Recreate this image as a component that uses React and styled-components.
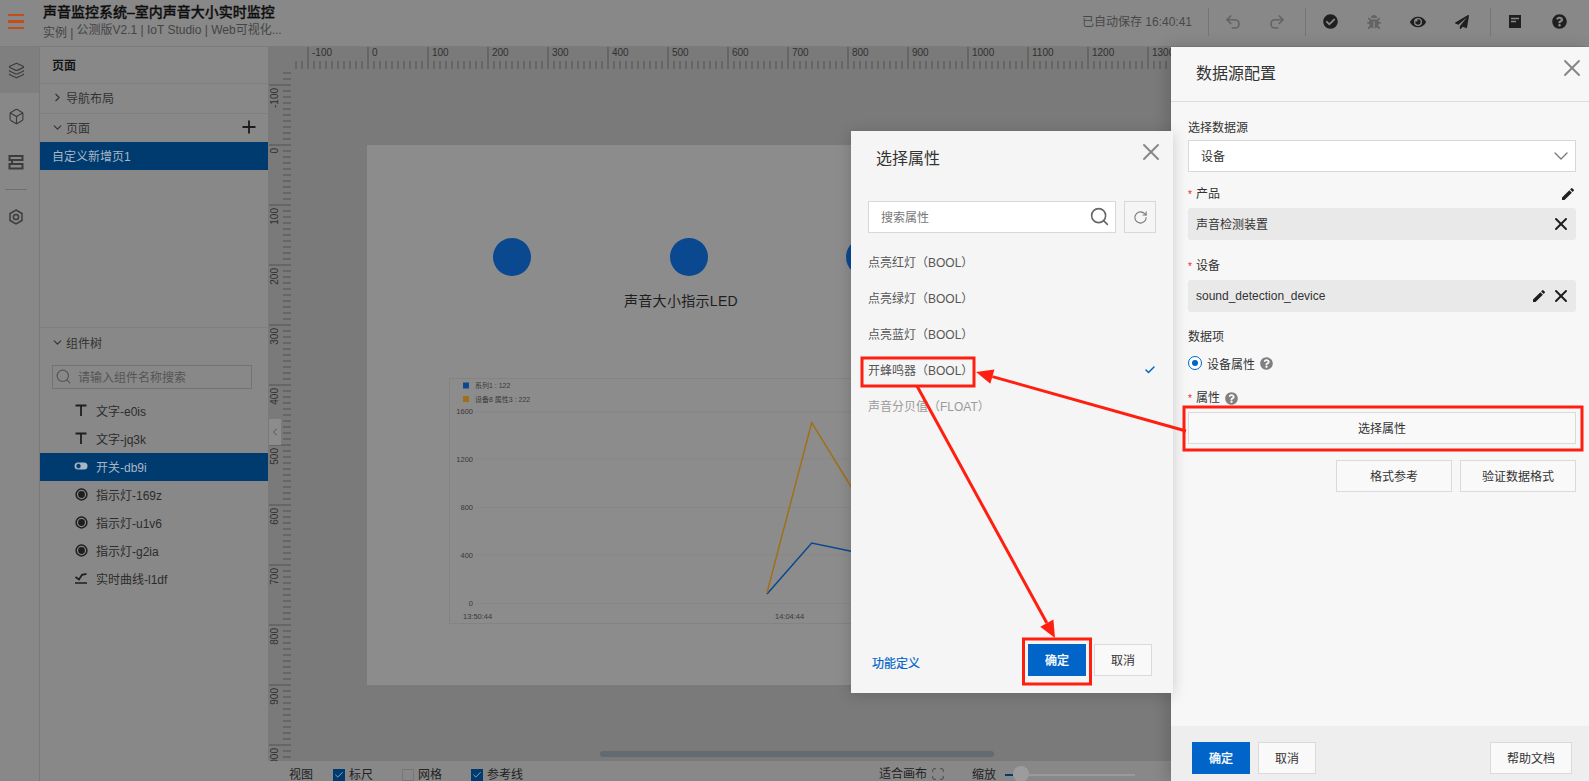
import React from "react";
import styled, { createGlobalStyle } from "styled-components";
import { Layers, Box, ChevronRight, ChevronDown, ChevronLeft, Plus, Search, X, RotateCw, Check, Undo2, Redo2, Maximize } from "lucide-react";
import { FaCheckCircle, FaBug, FaEye, FaPaperPlane, FaQuestionCircle } from "react-icons/fa";
import { MdEdit } from "react-icons/md";

const GlobalStyle = createGlobalStyle`
  html, body {
    margin: 0;
    padding: 0;
    overflow: hidden;
    background: #888;
    font-family: "Liberation Sans", "Noto Sans CJK SC", sans-serif;
    font-size: 12px;
  }
  * { box-sizing: border-box; }
`;

const Page = styled.div`
  position: relative;
  width: 1589px;
  height: 781px;
  overflow: hidden;
  display: flex;
  flex-direction: column;
  background: #888;
`;

/* top bar */
const Header = styled.header`
  height: 47px;
  flex: none;
  padding-bottom: 3px;
  display: flex;
  align-items: center;
  border-bottom: 1px solid #7c7c7c;
`;
const Burger = styled.div`
  width: 16px;
  margin: 0 19px 0 8px;
  display: flex;
  flex-direction: column;
  gap: 4px;
  span {
    height: 2.5px;
    background: #c04f1c;
  }
`;
const TitleBlock = styled.div`
  display: flex;
  flex-direction: column;
  gap: 1px;
  margin-top: -3px;
`;
const AppTitle = styled.div`
  font-size: 14px;
  line-height: 18px;
  font-weight: 500;
  color: #0e0e0e;
  -webkit-text-stroke: 0.3px #0e0e0e;
`;
const SubTitle = styled.div`
  font-size: 12px;
  line-height: 16px;
  color: #444;
  display: flex;
  gap: 3px;
  span:first-child {
    position: relative;
    top: 3px;
  }
`;
const SaveState = styled.div`
  margin: -3px 16px 0 auto;
  color: #484848;
  font-size: 12px;
`;
const Sep = styled.div`
  width: 1px;
  height: 28px;
  background: #757575;
`;
const ToolGroup = styled.div`
  display: flex;
  padding: ${(p) => p.$pad};
`;
const ToolBtn = styled.div`
  width: 44px;
  height: 36px;
  display: flex;
  align-items: center;
  justify-content: center;
  color: ${(p) => (p.$muted ? "#636363" : "#1f1f1f")};
`;

const Body = styled.div`
  flex: 1;
  display: flex;
  min-height: 0;
`;

/* icon rail */
const Rail = styled.nav`
  width: 40px;
  flex: none;
  border-right: 1px solid #7a7a7a;
  display: flex;
  flex-direction: column;
`;
const RailItem = styled.div`
  height: 46px;
  padding-right: 7px;
  display: flex;
  align-items: center;
  justify-content: center;
  color: #3c3c3c;
  background: ${(p) => (p.$active ? "#7f7f7f" : "transparent")};
`;
const RailLine = styled.div`
  height: 1px;
  width: 22px;
  margin: 4px 0 4px 5px;
  background: #6f6f6f;
`;

/* side panel */
const Side = styled.aside`
  width: 228px;
  flex: none;
  display: flex;
  flex-direction: column;
`;
const SideTitle = styled.div`
  height: 37px;
  padding: 0 0 2px 12px;
  display: flex;
  align-items: center;
  font-weight: bold;
  color: #161616;
  border-bottom: 1px solid #7e7e7e;
`;
const Section = styled.div`
  height: ${(p) => p.$h}px;
  display: flex;
  align-items: center;
  gap: 2px;
  padding: 0 9px 2px 11px;
  color: #333;
  border-bottom: ${(p) => (p.$line ? "1px solid #7e7e7e" : "none")};
  svg:last-child:not(:first-child) {
    margin-left: auto;
    color: #1c1c1c;
  }
`;
const SelectedRow = styled.div`
  height: 28px;
  display: flex;
  align-items: center;
  padding: 0 0 2px ${(p) => p.$pad}px;
  gap: 7px;
  background: ${(p) => (p.$on ? "#003b70" : "transparent")};
  color: ${(p) => (p.$on ? "#a9b6c3" : "#2c2c2c")};
`;
const PagesPart = styled.div`
  height: 281px;
  flex: none;
  border-bottom: 1px solid #7e7e7e;
`;
const TreeSearch = styled.div`
  height: 24px;
  margin: 7px 16px 8px 12px;
  padding: 0 0 1px 2px;
  border: 1px solid #737373;
  display: flex;
  align-items: center;
  gap: 6px;
  color: #555;
`;
const IconSlot = styled.span`
  width: 16px;
  height: 16px;
  flex: none;
  display: flex;
  align-items: center;
  justify-content: center;
`;

/* canvas */
const CanvasCol = styled.main`
  flex: 1;
  min-width: 0;
  position: relative;
  display: flex;
  flex-direction: column;
  background: #7a7a7a;
`;
const HRuler = styled.div`
  height: 22px;
  flex: none;
  margin-left: 23px;
  padding-left: 16px;
  display: flex;
  overflow: hidden;
  background-image: repeating-linear-gradient(90deg, #666 0 2px, transparent 2px 6px);
  background-repeat: no-repeat;
  background-position: 4px 14px;
  background-size: 100% 8px;
`;
const HTick = styled.div`
  width: 60px;
  flex: none;
  border-left: 2px solid #666;
  padding: 0 0 0 3px;
  font-size: 10px;
  line-height: 12px;
  color: #303030;
`;
const CanvasMiddle = styled.div`
  flex: 1;
  min-height: 0;
  display: flex;
  overflow: hidden;
`;
const VRuler = styled.div`
  width: 23px;
  flex: none;
  padding-top: 15px;
  overflow: hidden;
  background-image: repeating-linear-gradient(180deg, #666 0 2px, transparent 2px 6px);
  background-repeat: no-repeat;
  background-position: 15px 3px;
  background-size: 8px 100%;
`;
const VTick = styled.div`
  height: 60px;
  margin-left: 1px;
  border-top: 2px solid #666;
  font-size: 10px;
  line-height: 12px;
  color: #303030;
  span {
    display: block;
    width: 12px;
    margin-top: 2px;
    writing-mode: vertical-rl;
    transform: rotate(180deg);
    white-space: nowrap;
    text-align: left;
  }
`;
const Stage = styled.div`
  flex: none;
  padding: 76px 0 0 76px;
`;
const ArtBoard = styled.div`
  position: relative;
  width: 900px;
  height: 540px;
  background: #8c8c8c;
`;
const Led = styled.div`
  position: absolute;
  left: ${(p) => p.$x}px;
  top: 93px;
  width: 38px;
  height: 38px;
  border-radius: 50%;
  background: #0a488f;
`;
const Caption = styled.div`
  position: absolute;
  left: 257px;
  top: 146px;
  font-size: 14px;
  line-height: 20px;
  letter-spacing: 0.3px;
  color: #1e1e1e;
`;
const ChartSvg = styled.svg`
  position: absolute;
  left: 82px;
  top: 233px;
  font-family: "Liberation Sans", "Noto Sans CJK SC", sans-serif;
`;
const CollapseTab = styled.div`
  position: absolute;
  left: 1px;
  top: 372px;
  width: 12px;
  height: 26px;
  background: #8c8c8c;
  color: #555;
  display: flex;
  align-items: center;
  justify-content: center;
`;
const ScrollThumb = styled.div`
  position: absolute;
  left: 332px;
  top: 704px;
  width: 394px;
  height: 6px;
  border-radius: 3px;
  background: #636a70;
`;
const BottomBar = styled.div`
  height: 20px;
  flex: none;
  background: #888;
  display: flex;
  align-items: flex-end;
  padding-left: 21px;
  line-height: 12px;
  color: #222;
  white-space: nowrap;
`;
const BarItem = styled.div`
  display: flex;
  align-items: center;
  gap: 4px;
  margin-left: ${(p) => p.$left}px;
`;
const Tick = styled.span`
  width: 12px;
  height: 12px;
  display: flex;
  align-items: center;
  justify-content: center;
  background: ${(p) => (p.$on ? "#003b70" : "transparent")};
  border: 1px solid ${(p) => (p.$on ? "#003b70" : "#777")};
  color: #a9b6c3;
`;
const Slider = styled.div`
  width: 130px;
  height: 2px;
  margin-left: 5px;
  position: relative;
  background: #9a9a9a;
  &::before {
    content: "";
    position: absolute;
    left: 0;
    top: 0;
    width: 8px;
    height: 2px;
    background: #003b70;
  }
  &::after {
    content: "";
    position: absolute;
    left: 8px;
    top: -8px;
    width: 16px;
    height: 16px;
    border-radius: 50%;
    background: #9c9c9c;
  }
`;

/* shared controls */
const Button = styled.div`
  height: 32px;
  width: ${(p) => p.$w};
  flex: none;
  display: flex;
  align-items: center;
  justify-content: center;
  padding-bottom: 1px;
  font-size: 12px;
  color: ${(p) => (p.$primary ? "#fff" : "#333")};
  -webkit-text-stroke: ${(p) => (p.$primary ? "0.3px #fff" : "0")};
  background: ${(p) => (p.$primary ? "#0064c8" : "#f9f9f9")};
  border: 1px solid ${(p) => (p.$primary ? "#0064c8" : "#dadada")};
`;

/* data source drawer */
const Drawer = styled.section`
  position: absolute;
  right: 0;
  top: 47px;
  bottom: 0;
  width: 418px;
  display: flex;
  flex-direction: column;
  background: #f7f7f7;
  box-shadow: -4px 0 14px rgba(0, 0, 0, 0.16);
`;
const DrawerHead = styled.div`
  height: 55px;
  flex: none;
  padding: 0 3px 0 25px;
  display: flex;
  justify-content: space-between;
  border-bottom: 1px solid #dcdcdc;
  h2 {
    margin: 17px 0 0;
    font-size: 16px;
    line-height: 20px;
    font-weight: normal;
    color: #333;
  }
  svg {
    margin-top: 7px;
    color: #888;
  }
`;
const DrawerBody = styled.div`
  flex: 1;
  padding: 18px 13px 0 17px;
  display: flex;
  flex-direction: column;
  color: #333;
`;
const FieldLabel = styled.div`
  height: 16px;
  line-height: 16px;
  margin-top: ${(p) => p.$top || 0}px;
  margin-bottom: ${(p) => p.$bottom}px;
  display: flex;
  align-items: center;
  padding-left: ${(p) => (p.$req ? 8 : 0)}px;
  position: relative;
  gap: 5px;
  ${(p) =>
    p.$req &&
    `&::before {
      content: "*";
      position: absolute;
      left: 0;
      top: 1px;
      color: #f5222d;
      font-size: 10px;
    }`}
`;
const EditIcon = styled(MdEdit)`
  margin-left: auto;
  color: #222;
`;
const SelectBox = styled.div`
  height: 32px;
  background: #fff;
  border: 1px solid #d8d8d8;
  display: flex;
  align-items: center;
  justify-content: space-between;
  padding: 0 2px 1px 12px;
  svg {
    color: #777;
  }
`;
const ValueBox = styled.div`
  height: 32px;
  border-radius: 3px;
  background: #e9e9e9;
  display: flex;
  align-items: center;
  padding: 0 5px 0 8px;
  gap: 4px;
  color: #333;
  span {
    margin-right: auto;
    margin-bottom: ${(p) => (p.$cjk ? 1 : 0)}px;
  }
  svg {
    color: #1e1e1e;
  }
`;
const RadioRow = styled.div`
  height: 16px;
  margin-top: 10px;
  display: flex;
  align-items: center;
  gap: 5px;
`;
const Radio = styled.span`
  width: 14px;
  height: 14px;
  border-radius: 50%;
  border: 1px solid #0064c8;
  background: #fff;
  display: flex;
  align-items: center;
  justify-content: center;
  &::after {
    content: "";
    width: 6px;
    height: 6px;
    border-radius: 50%;
    background: #0064c8;
  }
`;
const HelpIcon = styled(FaQuestionCircle)`
  color: #808080;
`;
const RightButtons = styled.div`
  margin-top: 16px;
  display: flex;
  justify-content: flex-end;
  gap: 8px;
`;
const DrawerFoot = styled.div`
  height: 55px;
  flex: none;
  background: #eee;
  padding: 16px 17px 0 21px;
  display: flex;
  gap: 8px;
  > :last-child {
    margin-left: auto;
  }
`;

/* attribute dialog */
const Dialog = styled.section`
  position: absolute;
  left: 851px;
  top: 131px;
  width: 322px;
  height: 562px;
  display: flex;
  flex-direction: column;
  background: #f5f5f5;
  box-shadow: 0 2px 14px rgba(0, 0, 0, 0.18);
`;
const DialogHead = styled.div`
  height: 70px;
  flex: none;
  padding: 0 8px 0 25px;
  display: flex;
  justify-content: space-between;
  h3 {
    margin: 18px 0 0;
    font-size: 16px;
    line-height: 20px;
    font-weight: normal;
    color: #333;
  }
  svg {
    margin-top: 7px;
    color: #888;
  }
`;
const SearchRow = styled.div`
  height: 32px;
  flex: none;
  margin: 0 17px 11px;
  display: flex;
  gap: 8px;
`;
const SearchBox = styled.div`
  flex: 1;
  background: #fff;
  border: 1px solid #d8d8d8;
  padding: 0 5px 1px 12px;
  display: flex;
  align-items: center;
  justify-content: space-between;
  color: #777;
  svg {
    color: #666;
  }
`;
const RefreshBox = styled.div`
  width: 32px;
  border: 1px solid #d8d8d8;
  display: flex;
  align-items: center;
  justify-content: center;
  color: #777;
`;
const AttrRow = styled.div`
  height: 36px;
  flex: none;
  padding: 0 17px 1px;
  display: flex;
  align-items: center;
  justify-content: space-between;
  color: ${(p) => (p.$off ? "#9a9a9a" : "#555")};
  svg {
    color: #0064c8;
  }
`;
const DialogFoot = styled.div`
  margin-top: auto;
  padding: 0 21px 17px 21px;
  display: flex;
  align-items: center;
  gap: 8px;
  a {
    margin-right: auto;
    margin-top: 4px;
    color: #0064c8;
    -webkit-text-stroke: 0.2px #0064c8;
  }
`;

const Annotations = styled.svg`
  position: absolute;
  left: 0;
  top: 0;
  pointer-events: none;
`;

/* small drawn icons */
const StackIcon = () => (
  <svg width="18" height="18" viewBox="0 0 18 18" fill="none" stroke="currentColor" strokeWidth="2">
    <path d="M2.5 3h13v4h-13zM2.5 11h13v4.5h-13zM5 7v4" />
  </svg>
);
const NutIcon = () => (
  <svg width="18" height="18" viewBox="0 0 18 18" fill="none" stroke="currentColor" strokeWidth="1.5">
    <path d="M9 2l6 3.5v7L9 16l-6-3.5v-7z" />
    <circle cx="9" cy="9" r="2.6" />
  </svg>
);
const TextIcon = () => (
  <svg width="14" height="14" viewBox="0 0 14 14" fill="none" stroke="#1e1e1e" strokeWidth="1.8">
    <path d="M1.5 2.5h11M7 2.5V13" />
  </svg>
);
const ToggleIcon = () => (
  <svg width="14" height="10" viewBox="0 0 14 10">
    <rect x="0.5" y="1.5" width="13" height="7" rx="3.5" fill="#a9b6c3" />
    <circle cx="4.5" cy="5" r="2.6" fill="#003b70" stroke="#a9b6c3" strokeWidth="0.8" />
  </svg>
);
const LedIcon = () => (
  <svg width="13" height="13" viewBox="0 0 13 13">
    <circle cx="6.5" cy="6.5" r="5.4" fill="none" stroke="#1e1e1e" strokeWidth="1.5" />
    <circle cx="6.5" cy="6.5" r="3.4" fill="#1e1e1e" />
  </svg>
);
const CurveIcon = () => (
  <svg width="14" height="13" viewBox="0 0 14 13" fill="none" stroke="#1e1e1e" strokeWidth="1.7">
    <path d="M1.5 5L5 7.5 8 2.8l4.5-1M1 11h12" />
  </svg>
);
const DocIcon = () => (
  <svg width="12" height="13" viewBox="0 0 12 13">
    <rect width="12" height="13" fill="#1f1f1f" />
    <path d="M2 3.5h8M2 6.5h5" stroke="#888" strokeWidth="1.3" />
  </svg>
);

const hLabels = [-100, 0, 100, 200, 300, 400, 500, 600, 700, 800, 900, 1000, 1100, 1200, 1300];
const vLabels = [-100, 0, 100, 200, 300, 400, 500, 600, 700, 800, 900, 1000];
const chartGrid = [
  ["1600", 33.7],
  ["1200", 81],
  ["800", 129.5],
  ["400", 177],
  ["0", 225.5],
];
const components = [
  { name: "文字-e0is", icon: <TextIcon /> },
  { name: "文字-jq3k", icon: <TextIcon /> },
  { name: "开关-db9i", icon: <ToggleIcon />, on: true },
  { name: "指示灯-169z", icon: <LedIcon /> },
  { name: "指示灯-u1v6", icon: <LedIcon /> },
  { name: "指示灯-g2ia", icon: <LedIcon /> },
  { name: "实时曲线-l1df", icon: <CurveIcon /> },
];
const attrs = [
  { name: "点亮红灯（BOOL）" },
  { name: "点亮绿灯（BOOL）" },
  { name: "点亮蓝灯（BOOL）" },
  { name: "开蜂鸣器（BOOL）", checked: true },
  { name: "声音分贝值（FLOAT）", off: true },
];

const Chart = () => (
  <ChartSvg width="760" height="246" viewBox="0 0 760 246">
    <rect x="0.5" y="0.5" width="759" height="245" fill="none" stroke="#838383" />
    <rect x="14" y="4.5" width="6" height="6" fill="#0a488f" />
    <rect x="14" y="18" width="6" height="6" fill="#a07018" />
    <text x="26" y="10" fontSize="7" fill="#3a3a3a">系列1 : 122</text>
    <text x="26" y="23.5" fontSize="7" fill="#3a3a3a">设备8 属性3 : 222</text>
    {chartGrid.map(([label, y]) => (
      <g key={label}>
        <line x1="26" x2="760" y1={y} y2={y} stroke="#878787" />
        <text x="24" y={y + 2.5} fontSize="7.5" textAnchor="end" fill="#3a3a3a">{label}</text>
      </g>
    ))}
    <text x="14" y="241" fontSize="7.5" fill="#3a3a3a">13:50:44</text>
    <text x="326" y="241" fontSize="7.5" fill="#3a3a3a">14:04:44</text>
    <polyline points="318,216 362.7,165 401,173 440,185" fill="none" stroke="#0a488f" strokeWidth="1.5" />
    <polyline points="318,214.7 362.7,44.7 401,107 440,170" fill="none" stroke="#a07018" strokeWidth="1.5" />
  </ChartSvg>
);

const Arrow = ({ x1, y1, x2, y2 }) => {
  const a = Math.atan2(y2 - y1, x2 - x1);
  const len = 17;
  const wing = 7.5;
  const bx = x2 - len * Math.cos(a);
  const by = y2 - len * Math.sin(a);
  const px = wing * Math.sin(a);
  const py = wing * Math.cos(a);
  return (
    <g>
      <line x1={x1} y1={y1} x2={bx} y2={by} stroke="#ff1f10" strokeWidth="3" />
      <polygon points={`${x2},${y2} ${bx + px},${by - py} ${bx - px},${by + py}`} fill="#ff1f10" />
    </g>
  );
};

const App = () => {
  return (
    <Page>
      <GlobalStyle />
      <Header>
        <Burger>
          <span />
          <span />
          <span />
        </Burger>
        <TitleBlock>
          <AppTitle>声音监控系统–室内声音大小实时监控</AppTitle>
          <SubTitle>
            <span>实例 |</span>
            <span>公测版V2.1 | IoT Studio | Web可视化...</span>
          </SubTitle>
        </TitleBlock>
        <SaveState>已自动保存 16:40:41</SaveState>
        <Sep />
        <ToolGroup $pad="0 6px 0 2px">
          <ToolBtn $muted><Undo2 size={18} strokeWidth={2.2} /></ToolBtn>
          <ToolBtn $muted><Redo2 size={18} strokeWidth={2.2} /></ToolBtn>
        </ToolGroup>
        <Sep />
        <ToolGroup $pad="0 6px 0 2px">
          <ToolBtn><FaCheckCircle size={15} /></ToolBtn>
          <ToolBtn $muted><FaBug size={14} /></ToolBtn>
          <ToolBtn><FaEye size={16} /></ToolBtn>
          <ToolBtn><FaPaperPlane size={14} /></ToolBtn>
        </ToolGroup>
        <Sep />
        <ToolGroup $pad="0 8px 0 2px">
          <ToolBtn><DocIcon /></ToolBtn>
          <ToolBtn><FaQuestionCircle size={15} /></ToolBtn>
        </ToolGroup>
      </Header>

      <Body>
        <Rail>
          <RailItem $active><Layers size={17} strokeWidth={1.6} /></RailItem>
          <RailItem><Box size={17} strokeWidth={1.6} /></RailItem>
          <RailItem><StackIcon /></RailItem>
          <RailLine />
          <RailItem><NutIcon /></RailItem>
        </Rail>

        <Side>
          <PagesPart>
            <SideTitle>页面</SideTitle>
            <Section $h={30} $line>
              <ChevronRight size={13} />
              导航布局
            </Section>
            <Section $h={28}>
              <ChevronDown size={13} />
              页面
              <Plus size={20} strokeWidth={2.2} />
            </Section>
            <SelectedRow $on $pad={12}>自定义新增页1</SelectedRow>
          </PagesPart>
          <Section $h={30}>
            <ChevronDown size={13} />
            组件树
          </Section>
          <TreeSearch>
            <Search size={17} strokeWidth={1.6} />
            请输入组件名称搜索
          </TreeSearch>
          {components.map((c) => (
            <SelectedRow key={c.name} $on={c.on} $pad={33}>
              <IconSlot>{c.icon}</IconSlot>
              {c.name}
            </SelectedRow>
          ))}
        </Side>

        <CanvasCol>
          <HRuler>
            {hLabels.map((n) => (
              <HTick key={n}>{n}</HTick>
            ))}
          </HRuler>
          <CanvasMiddle>
            <VRuler>
              {vLabels.map((n) => (
                <VTick key={n}>
                  <span>{n}</span>
                </VTick>
              ))}
            </VRuler>
            <Stage>
              <ArtBoard>
                <Led $x={126} />
                <Led $x={303} />
                <Led $x={479} />
                <Caption>声音大小指示LED</Caption>
                <Chart />
              </ArtBoard>
            </Stage>
          </CanvasMiddle>
          <CollapseTab><ChevronLeft size={12} /></CollapseTab>
          <ScrollThumb />
          <BottomBar>
            <BarItem>视图</BarItem>
            <BarItem $left={20}><Tick $on><Check size={10} /></Tick>标尺</BarItem>
            <BarItem $left={29}><Tick />网格</BarItem>
            <BarItem $left={29}><Tick $on><Check size={10} /></Tick>参考线</BarItem>
            <BarItem $left={356}>适合画布<Maximize size={14} strokeWidth={1} /></BarItem>
            <BarItem $left={27}>缩放<Slider /></BarItem>
          </BottomBar>
        </CanvasCol>
      </Body>

      <Drawer>
        <DrawerHead>
          <h2>数据源配置</h2>
          <X size={28} strokeWidth={1.7} />
        </DrawerHead>
        <DrawerBody>
          <FieldLabel $bottom={4}>选择数据源</FieldLabel>
          <SelectBox>
            设备
            <ChevronDown size={24} strokeWidth={1.3} />
          </SelectBox>
          <FieldLabel $req $top={14} $bottom={6}>
            产品
            <EditIcon size={16} />
          </FieldLabel>
          <ValueBox $cjk>
            <span>声音检测装置</span>
            <X size={20} strokeWidth={2.4} />
          </ValueBox>
          <FieldLabel $req $top={18} $bottom={6}>设备</FieldLabel>
          <ValueBox>
            <span>sound_detection_device</span>
            <MdEdit size={16} />
            <X size={20} strokeWidth={2.4} />
          </ValueBox>
          <FieldLabel $top={17} $bottom={0}>数据项</FieldLabel>
          <RadioRow>
            <Radio />
            设备属性
            <HelpIcon size={13} />
          </RadioRow>
          <FieldLabel $req $top={19} $bottom={6}>
            属性
            <HelpIcon size={13} />
          </FieldLabel>
          <Button $w="100%">选择属性</Button>
          <RightButtons>
            <Button $w="116px">格式参考</Button>
            <Button $w="116px">验证数据格式</Button>
          </RightButtons>
        </DrawerBody>
        <DrawerFoot>
          <Button $primary $w="58px">确定</Button>
          <Button $w="58px">取消</Button>
          <Button $w="82px">帮助文档</Button>
        </DrawerFoot>
      </Drawer>

      <Dialog>
        <DialogHead>
          <h3>选择属性</h3>
          <X size={28} strokeWidth={1.7} />
        </DialogHead>
        <SearchRow>
          <SearchBox>
            搜索属性
            <Search size={21} strokeWidth={1.8} />
          </SearchBox>
          <RefreshBox><RotateCw size={15} strokeWidth={1.7} /></RefreshBox>
        </SearchRow>
        {attrs.map((a) => (
          <AttrRow key={a.name} $off={a.off}>
            {a.name}
            {a.checked && <Check size={12} strokeWidth={3} />}
          </AttrRow>
        ))}
        <DialogFoot>
          <a>功能定义</a>
          <Button $primary $w="58px">确定</Button>
          <Button $w="58px">取消</Button>
        </DialogFoot>
      </Dialog>

      <Annotations width="1589" height="781" viewBox="0 0 1589 781">
        <g fill="none" stroke="#ff1f10" strokeWidth="3">
          <rect x="862" y="358" width="112" height="28" />
          <rect x="1184" y="407" width="398" height="43" />
          <rect x="1023.5" y="639" width="67" height="45" />
        </g>
        <Arrow x1={1186} y1={431} x2={976} y2={372} />
        <Arrow x1={917} y1={386} x2={1055} y2={638} />
      </Annotations>
    </Page>
  );
};

export default App;
